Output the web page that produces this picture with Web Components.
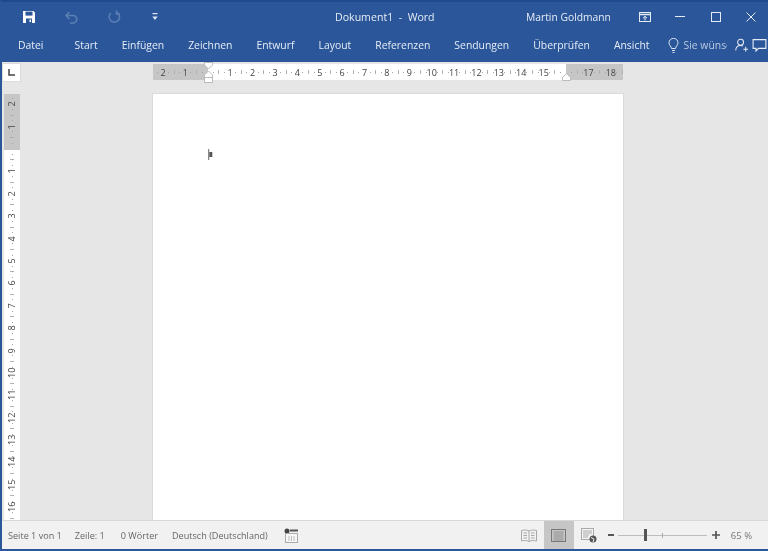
<!DOCTYPE html>
<html lang="de"><head><meta charset="utf-8"><title>Dokument1 - Word</title>
<style>
html,body{margin:0;padding:0;height:100%;overflow:hidden;background:#2b579a}
body{font-family:"Open Sans","Noto Sans",sans-serif}
</style></head><body>
<word-app>
  <word-titlebar></word-titlebar>
  <word-tabs></word-tabs>
  <word-workspace></word-workspace>
  <word-status></word-status>
</word-app>
<script>
function def(name,html,init){
  customElements.define(name,class extends HTMLElement{
    constructor(){super();this.attachShadow({mode:'open'}).innerHTML=html;}
    connectedCallback(){if(init&&!this._i){this._i=1;init(this.shadowRoot,this);}}
  });
}
def('word-app',`<style>:host{display:flex;flex-direction:column;width:768px;height:551px;box-sizing:border-box;border-top:2px solid #1e4b8f;border-bottom:2px solid #2b579a;border-left:2px solid #2b579a;background:#e6e6e6;filter:blur(.35px)}</style><slot></slot>`);

def('word-titlebar',`<style>
:host{display:flex;align-items:center;height:29px;flex:none;background:#2b579a;color:#e6ecf5;font-size:10.6px;margin-left:-2px}
svg{display:block;flex:none}
.qa{display:flex;align-items:center;margin-left:22px;width:140px;flex:none}
.qa svg:nth-child(2){margin-left:28px}.qa svg:nth-child(3){margin-left:29px}.qa svg:nth-child(4){margin-left:31px}
.t{margin-left:173px;width:100px;white-space:pre;flex:none}
.u{margin-left:91px;width:85px;white-space:nowrap;flex:none;font-size:10.3px}
.w{display:flex;align-items:center;margin-left:28px}
.w svg:nth-child(2){margin-left:24px}.w svg:nth-child(3){margin-left:26px}.w svg:nth-child(4){margin-left:25px}
</style>
<div class="qa">
<svg width="14" height="14" viewBox="0 0 14 14"><path d="M1 1h10.5L13 2.500V13H1z" fill="#fff"/><rect x="3.500" y="1.600" width="7" height="4" fill="#2b579a"/><rect x="4" y="8.500" width="6" height="4.500" fill="#2b579a"/><rect x="7.500" y="9.500" width="1.500" height="2.500" fill="#fff"/></svg>
<svg width="14" height="14" viewBox="0 0 14 14" fill="none" stroke="#5b7fb5" stroke-width="1.600"><path d="M5.500 2 2 5.500 5.500 9M2.500 5.500H9a3.200 3.200 0 0 1 0 7.500H6"/></svg>
<svg width="14" height="14" viewBox="0 0 14 14" fill="none" stroke="#5b7fb5" stroke-width="1.500"><path d="M9.500 2.200A5.200 5.200 0 1 1 4 3M9.500 .5v3.500H13"/></svg>
<svg width="6" height="8" viewBox="0 0 6 8"><rect x=".5" y="0" width="5" height="1.200" fill="#dfe7f3"/><path d="M.3 3.500h5.400L3 7z" fill="#dfe7f3"/></svg>
</div>
<div class="t">Dokument1  -  Word</div>
<div class="u">Martin Goldmann</div>
<div class="w">
<svg width="12" height="10" viewBox="0 0 12 10" fill="none" stroke="#e6ecf5"><rect x=".5" y=".5" width="11" height="9"/><path d="M.5 2.500h11" stroke-width="1.500"/><path d="M6 8.500V4.500M4 6.200 6 4.300 8 6.200" /></svg>
<svg width="10" height="1" viewBox="0 0 10 1"><rect width="10" height="1" fill="#e6ecf5"/></svg>
<svg width="10" height="10" viewBox="0 0 10 10" fill="none" stroke="#e6ecf5"><rect x=".5" y=".5" width="9" height="9"/></svg>
<svg width="10" height="10" viewBox="0 0 10 10" fill="none" stroke="#e6ecf5"><path d="M.5.500l9 9M9.500.500l-9 9"/></svg>
</div>`);

def('word-tabs',`<style>
:host{display:flex;align-items:center;height:31px;flex:none;background:#2b579a;color:#e6ecf5;font-size:10.4px;margin-left:-2px;padding-left:18px;white-space:nowrap;overflow:hidden;box-sizing:border-box;padding-bottom:3px}
span{margin-right:24px}
span:first-of-type{margin-right:31px}
.h{display:flex;align-items:center;color:#b9c9e0;margin:0}
svg{display:block;flex:none}
.clip{width:44px;overflow:hidden;margin-left:4px}
.r{display:flex;align-items:center;gap:4px;margin-left:8px}
</style>
<span>Datei</span><span>Start</span><span>Einfügen</span><span>Zeichnen</span><span>Entwurf</span><span>Layout</span><span>Referenzen</span><span>Sendungen</span><span>Überprüfen</span><span style="margin-right:19px">Ansicht</span>
<div class="h"><svg width="11" height="15" viewBox="0 0 11 15" fill="none" stroke="#dbe4f1"><path d="M3.500 10.500C3.500 8.500 1 7.500 1 4.800a4.500 4.500 0 0 1 9 0C10 7.500 7.500 8.500 7.500 10.500zM4 12.500h3M4.500 14.500h2"/></svg><div class="clip">Sie wünschen</div></div>
<div class="r"><svg width="13" height="14" viewBox="0 0 14 14" fill="none" stroke="#e6ecf5" stroke-width="1.100"><circle cx="6" cy="4" r="3.200"/><path d="M.8 13c0-3.500 2-5.500 5.200-5.500 1 0 1.800.2 2.500.6M9 11.500h5M11.500 9v5"/></svg>
<svg width="15" height="13" viewBox="0 0 14 13" fill="none" stroke="#e6ecf5" stroke-width="1.100"><path d="M.6.600h12.800v8.800H6L3.500 12V9.400H.6z"/></svg></div>`);

function rulerCells(root,nums){
  const box=root.querySelector('.r');
  nums.forEach(n=>{
    const c=document.createElement('div');c.className='cell';
    c.innerHTML=`<b>${n}</b><i class="d"></i><i class="t"></i><i class="d"></i>`;
    box.append(c);
  });
}
def('word-hruler',`<style>
:host{display:block;width:470px;height:16px;background:linear-gradient(90deg,#c6c6c6 55px,#fff 55px,#fff 413px,#c6c6c6 413px);font-family:"Open Sans",sans-serif;position:relative}
.c{height:16px;overflow:hidden}
.r{display:flex;height:16px;margin-left:-15.2px}
.cell{display:flex;flex:none;width:22.4px;height:100%}
.cell>*{flex:none;width:5.6px;height:100%;display:flex;align-items:center;justify-content:center}
.cell b{font-weight:400;font-size:9px;color:#444;line-height:1;white-space:nowrap}
.d::after{content:"";flex:none;width:1px;height:1px;background:#a5a5a5}
.t::after{content:"";flex:none;width:1px;height:4px;background:#b0b0b0}
.m{position:absolute;left:51px;top:-2px}
.m2{position:absolute;left:409px;top:9px}
</style><div class="c"><div class="r"></div></div>
<svg class="m" width="9" height="21" viewBox="0 0 9 21"><path d="M.5.500h8V3L4.500 7 .5 3z" fill="#fff" stroke="#bbb"/><path d="M4.500 9 .5 13v2.500h8V13z" fill="#fff" stroke="#bbb"/><rect x=".5" y="15.500" width="8" height="5" fill="#fff" stroke="#bbb"/></svg>
<svg class="m2" width="9" height="8" viewBox="0 0 9 8"><path d="M4.500 .5 .5 4.500V7.500h8V4.500z" fill="#fff" stroke="#bbb"/></svg>`,
r=>rulerCells(r,['',2,1,'',1,2,3,4,5,6,7,8,9,10,11,12,13,14,15,'',17,18]));

def('word-vruler',`<style>
:host{display:block;width:16px;height:426px;background:linear-gradient(180deg,#c6c6c6 56px,#fff 56px);font-family:"Open Sans",sans-serif;overflow:hidden}
.r{display:flex;flex-direction:column;margin-top:-15.2px}
.cell{display:flex;flex-direction:column;height:22.4px;flex:none}
.cell>*{flex:none;height:5.6px;width:16px;display:flex;align-items:center;justify-content:center}
.cell b{font-weight:400;font-size:9px;color:#444;line-height:1;white-space:nowrap}
.cell b{transform:rotate(-90deg)}
.d::after{content:"";flex:none;width:1px;height:1px;background:#a5a5a5}
.t::after{content:"";flex:none;width:4px;height:1px;background:#b0b0b0}
</style><div class="r"></div>`,
r=>rulerCells(r,['',2,1,'',1,2,3,4,5,6,7,8,9,10,11,12,13,14,15,16]));

def('word-workspace',`<style>
:host{display:grid;grid-template-columns:18px 133px 470px 1fr;grid-template-rows:32px 1fr;flex:1;min-height:0;background:#e6e6e6;overflow:hidden}
.corner{grid-column:1;grid-row:1;width:17px;height:17px;margin:2px 0 0 1px;background:#fff;box-shadow:0 0 0 1px #dcdcdc;display:flex;align-items:center;justify-content:center}
.hr{grid-column:3;grid-row:1;padding-top:2px}
.vr{grid-column:1;grid-row:2;margin-left:2px}
.page{grid-column:3;grid-row:2;background:#fff;box-shadow:0 0 0 1px #dadada;padding:55px 0 0 55px;box-sizing:border-box}
.cur{display:block}
</style>
<div class="corner"><svg width="7" height="7" viewBox="0 0 7 7"><path d="M1 0v6h6" fill="none" stroke="#444" stroke-width="1.500"/></svg></div>
<div class="hr"><word-hruler></word-hruler></div>
<div class="vr"><word-vruler></word-vruler></div>
<div class="page"><svg class="cur" width="6" height="11" viewBox="0 0 6 11"><rect x="0" y="0" width="1.300" height="11" fill="#888"/><rect x="1.300" y="3" width="3" height="5" fill="#555"/></svg></div>`);

def('word-status',`<style>
:host{display:flex;align-items:center;height:29px;flex:none;background:#f1f1f1;border-top:1px solid #d8d8d8;box-sizing:border-box;color:#666;font-size:9.1px;white-space:nowrap}
span{flex:none}
svg{display:block;flex:none}
.view{width:30px;height:100%;display:flex;align-items:center;justify-content:center;flex:none}
.on{background:#c6c6c6}
.line{width:89px;height:1px;background:#bdbdbd;position:relative;flex:none}
.knob{position:absolute;left:26px;top:-6px;width:3px;height:12px;background:#555}
.tick{position:absolute;left:44px;top:-2px;width:1px;height:5px;background:#aaa}
</style>
<span style="margin-left:6px">Seite 1 von 1</span>
<span style="margin-left:13px">Zeile: 1</span>
<span style="margin-left:16px">0 Wörter</span>
<span style="margin-left:14px">Deutsch (Deutschland)</span>
<svg style="margin-left:16px" width="15" height="15" viewBox="0 0 15 15"><circle cx="3" cy="3" r="2.500" fill="#444"/><rect x="6" y="1.500" width="8" height="2" fill="#555"/><rect x="1.500" y="5.500" width="12" height="9" fill="#f7f7f7" stroke="#aaa"/><path d="M5 8v5M7.500 8v5M10 8v5" stroke="#bbb"/></svg>
<svg style="margin-left:222px" width="16" height="13" viewBox="0 0 16 13" fill="none" stroke="#a8a8a8"><path d="M8 2C6 .8 3 .8.500 1.500v10.500C3 11.300 6 11.300 8 12.500c2-1.200 5-1.200 7.500-.5V1.500C13 .8 10 .8 8 2zM8 2v10.500M2.500 4h3.500M2.500 6.500h3.500M2.500 9h3.500M10 4h3.500M10 6.500h3.500M10 9h3.500"/></svg>
<div class="view on" style="margin-left:7px"><svg width="15" height="13" viewBox="0 0 15 13" fill="none" stroke="#777"><rect x=".5" y=".5" width="14" height="12"/><path d="M2.500 3h10M2.500 5h10M2.500 7h10M2.500 9h10M2.500 11h10" stroke="#8f8f8f"/></svg></div>
<svg style="margin-left:7px" width="16" height="15" viewBox="0 0 16 15"><rect x=".5" y=".5" width="12" height="11" fill="#f4f4f4" stroke="#aaa"/><path d="M2 3h9M2 5h9M2 7h6M2 9h5" stroke="#aaa"/><circle cx="12" cy="11" r="3.500" fill="#555"/><path d="M10 9.500l3 1.500-1 3" stroke="#eee" fill="none"/></svg>
<svg style="margin-left:11px" width="6" height="2" viewBox="0 0 6 2"><rect width="6" height="2" fill="#555"/></svg>
<div class="line" style="margin-left:4px"><div class="knob"></div><div class="tick"></div></div>
<svg style="margin-left:5px" width="8" height="8" viewBox="0 0 8 8"><path d="M0 4h8M4 0v8" stroke="#555" stroke-width="1.700"/></svg>
<span style="margin-left:11px;font-size:9.5px;color:#777">65 %</span>`);
</script>
</body></html>
